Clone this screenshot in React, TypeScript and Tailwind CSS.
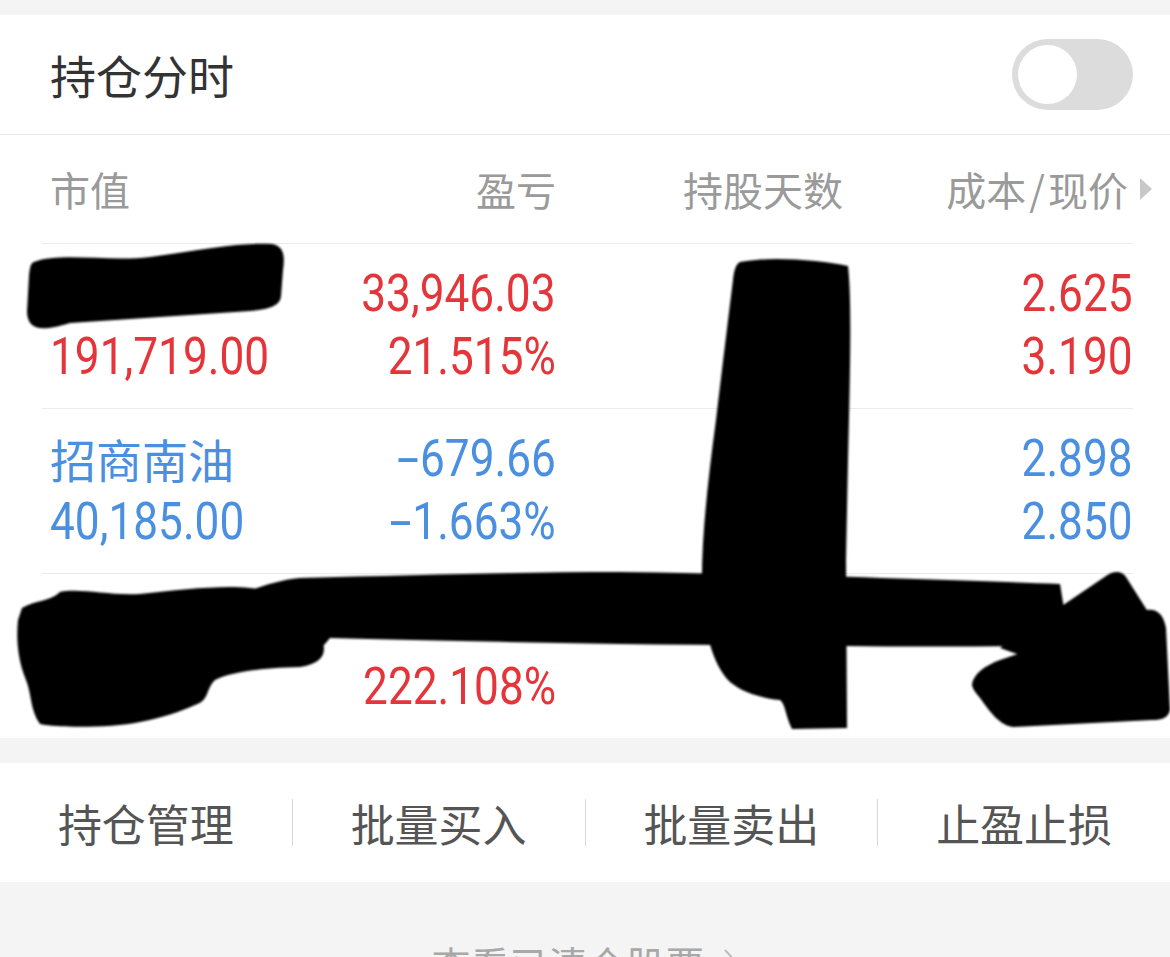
import React from "react"

const RED = "text-[#e4353a]"
const BLUE = "text-[#4a8fe0]"

type Cell = (string | null)[]
type Row = { color: string; cells: Cell[] }

const rows: Row[] = [
  { color: RED, cells: [[null, "191,719.00"], ["33,946.03", "21.515%"], [null, null], ["2.625", "3.190"]] },
  { color: BLUE, cells: [["招商南油", "40,185.00"], ["-679.66", "-1.663%"], [null, null], ["2.898", "2.850"]] },
  { color: RED, cells: [[null, null], [null, "222.108%"], [null, null], [null, null]] },
]

function Value({ text, left }: { text: string | null; left: boolean }) {
  if (!text) return <div className="h-[63px]" />
  const cjk = /[\u4e00-\u9fff]/.test(text)
  if (cjk) {
    return <div className="h-[63px] leading-[63px] text-[46px] font-['Noto_Sans_CJK_SC',sans-serif]">{text}</div>
  }
  const neg = text.startsWith("-")
  // DIN-like narrow digits: Roboto squeezed horizontally
  return (
    <div className="h-[63px] leading-[63px] text-[52px] font-['Roboto',sans-serif]">
      <span className={`inline-block scale-x-[0.85] ${left ? "origin-left" : "origin-right"}`}>
        {neg && <span className="inline-block w-[28px] scale-x-[1.8] text-center">-</span>}
        {neg ? text.slice(1) : text}
      </span>
    </div>
  )
}

function Scribbles() {
  // the black marker strokes drawn over the screenshot
  return (
    <svg className="pointer-events-none absolute left-0 top-0" width="1170" height="957" viewBox="0 0 1170 957">
      <defs>
        <filter id="soft">
          <feGaussianBlur stdDeviation="1.3" />
        </filter>
      </defs>
      <g fill="#050505" filter="url(#soft)">
        <path d="M34,262 C60,252 110,262 150,257 C200,250 240,242 272,244 C284,246 285,256 283,270 L281,296 C280,306 270,309 250,311 L70,323 C40,332 28,330 27,312 L29,276 C30,266 31,263 34,262 Z" />
        <path d="M740,262 C770,256 820,260 848,266 C852,300 850,380 848,460 L846,560 L847,728 L792,729 C785,715 786,705 780,700 C760,698 742,692 730,682 C712,664 704,630 702,590 C701,540 708,480 716,420 C722,370 728,320 733,280 C734,270 736,264 740,262 Z" />
        <path d="M246,592 C265,585 280,580 300,578 C420,575 520,572 620,572 C780,574 950,580 1060,584 L1070,645 C950,648 800,646 620,644 C500,642 400,640 330,638 C320,650 310,660 300,666 L250,668 Z" />
        <path d="M22,608 C35,600 50,602 60,592 C80,588 110,596 140,594 C180,590 220,585 250,588 C290,592 305,610 322,640 C328,655 320,664 300,667 C260,668 230,672 215,680 C205,690 210,700 195,705 C180,712 160,718 140,722 C110,728 60,728 40,724 C30,710 32,695 26,680 C18,660 16,640 18,620 Z" />
        <path d="M1000,648 L1106,576 C1114,570 1122,571 1126,577 L1150,615 C1150,622 1144,627 1136,631 L1040,662 Z" />
        <path d="M972,684 C974,674 984,666 1000,660 L1146,610 C1158,608 1164,616 1166,628 L1170,710 C1168,718 1162,720 1152,720 L1014,727 C1000,726 990,712 980,698 C975,692 972,688 972,684 Z" />
      </g>
    </svg>
  )
}

export default function App() {
  const actions = ["持仓管理", "批量买入", "批量卖出", "止盈止损"]
  return (
    <main className="relative min-h-screen overflow-hidden bg-[#f4f4f4] pt-[15px] font-['Noto_Sans_CJK_SC',sans-serif]">
      <section className="bg-white">
        <div className="flex h-[120px] items-center justify-between border-b border-[#e8e8e8] pl-[50px] pr-[37px]">
          <h2 className="text-[46px] text-[#333]">持仓分时</h2>
          <div className="h-[71px] w-[121px] rounded-full bg-[#dcdcdc] p-[6px]">
            <div className="h-[59px] w-[59px] rounded-full bg-white" />
          </div>
        </div>

        <div className="ml-[42px] mr-[37px]">
          <div className="grid h-[108px] grid-cols-[258px_256px_287px_290px] items-center text-[40px] text-[#9a9a9a]">
            <div className="pl-[8px]">市值</div>
            <div className="text-right">盈亏</div>
            <div className="text-right">持股天数</div>
            <div className="mr-[-19px] flex items-center justify-end gap-[12px]">
              <span>
                成本<span className="mx-[3px]">/</span>现价
              </span>
              <span className="h-0 w-0 border-y-[11px] border-l-[12px] border-y-transparent border-l-[#c8c8c8]" />
            </div>
          </div>

          {rows.map((row, i) => (
            <div
              key={i}
              className={`grid h-[165px] grid-cols-[258px_256px_287px_290px] border-t border-[#ebebeb] pt-[18px] ${row.color}`}
            >
              {row.cells.map((cell, j) => (
                <div key={j} className={j === 0 ? "pl-[8px]" : "text-right"}>
                  <Value text={cell[0]} left={j === 0} />
                  <Value text={cell[1]} left={j === 0} />
                </div>
              ))}
            </div>
          ))}
        </div>
      </section>

      <section className="mt-[25px] flex h-[119px] items-center bg-white text-[44px] text-[#555]">
        {actions.map((a, i) => (
          <React.Fragment key={a}>
            {i > 0 && <div className="h-[47px] w-px bg-[#d8d8d8]" />}
            <div className="flex-1 text-center">{a}</div>
          </React.Fragment>
        ))}
      </section>

      <div className="mt-[52px] flex items-center justify-center gap-[18px] text-[39px] text-[#a8a8a8]">
        <span>查看已清仓股票</span>
        <svg width="16" height="30" viewBox="0 0 16 30">
          <path d="M2 2 L14 15 L2 28" fill="none" stroke="#bdbdbd" strokeWidth="2" />
        </svg>
      </div>

      <Scribbles />
    </main>
  )
}
